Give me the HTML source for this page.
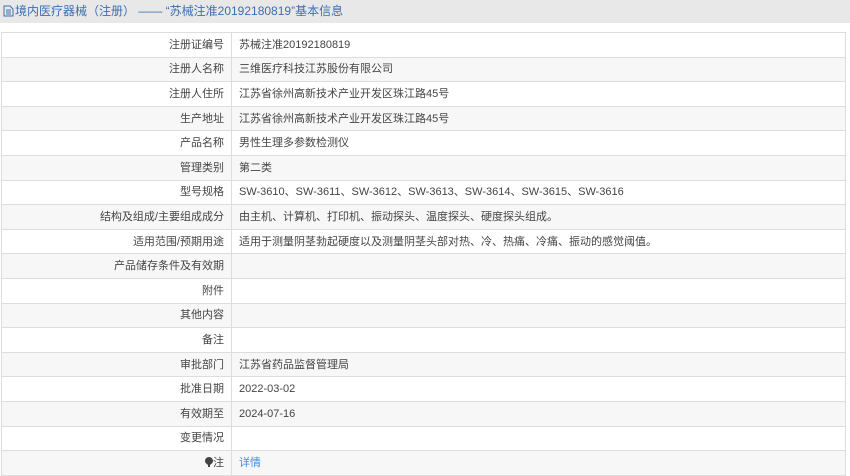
<!DOCTYPE html><html><head><meta charset="utf-8"><style>
body{margin:0;width:850px;height:476px;overflow:hidden;background:#fff;font-family:"Liberation Sans","Noto Sans CJK SC",sans-serif;}
.hd{height:23px;background:#e8e8e8;color:#3a6fb0;font-size:12px;line-height:23px;padding-left:3px;}
.hd svg{vertical-align:-2px;margin-right:1px}
table{position:absolute;top:32px;left:1px;width:845px;border-collapse:collapse;font-size:11px;color:#444;}
td{height:23.6px;border:1px solid #ddd;padding:0;line-height:14px;}
td.l{width:222px;text-align:right;padding-right:7px;}
td.v{padding-left:7px;}
tr:nth-child(even){background:#f7f7f7}
a{color:#3a8ee6;text-decoration:none}
</style></head><body>
<div class="hd"><svg width="11" height="12" viewBox="0 0 11 12"><path d="M1 1h6l3 3v7H1z" fill="none" stroke="#3a6fb0"/><path d="M3 5h5M3 7h5M3 9h5" stroke="#3a6fb0"/></svg>境内医疗器械（注册） —— “苏械注准20192180819”基本信息</div>
<table>
<tr><td class="l">注册证编号</td><td class="v">苏械注准20192180819</td></tr>
<tr><td class="l">注册人名称</td><td class="v">三维医疗科技江苏股份有限公司</td></tr>
<tr><td class="l">注册人住所</td><td class="v">江苏省徐州高新技术产业开发区珠江路45号</td></tr>
<tr><td class="l">生产地址</td><td class="v">江苏省徐州高新技术产业开发区珠江路45号</td></tr>
<tr><td class="l">产品名称</td><td class="v">男性生理多参数检测仪</td></tr>
<tr><td class="l">管理类别</td><td class="v">第二类</td></tr>
<tr><td class="l">型号规格</td><td class="v">SW-3610、SW-3611、SW-3612、SW-3613、SW-3614、SW-3615、SW-3616</td></tr>
<tr><td class="l">结构及组成/主要组成成分</td><td class="v">由主机、计算机、打印机、振动探头、温度探头、硬度探头组成。</td></tr>
<tr><td class="l">适用范围/预期用途</td><td class="v">适用于测量阴茎勃起硬度以及测量阴茎头部对热、冷、热痛、冷痛、振动的感觉阈值。</td></tr>
<tr><td class="l">产品储存条件及有效期</td><td class="v"></td></tr>
<tr><td class="l">附件</td><td class="v"></td></tr>
<tr><td class="l">其他内容</td><td class="v"></td></tr>
<tr><td class="l">备注</td><td class="v"></td></tr>
<tr><td class="l">审批部门</td><td class="v">江苏省药品监督管理局</td></tr>
<tr><td class="l">批准日期</td><td class="v">2022-03-02</td></tr>
<tr><td class="l">有效期至</td><td class="v">2024-07-16</td></tr>
<tr><td class="l">变更情况</td><td class="v"></td></tr>
<tr><td class="l"><svg width="8" height="10" viewBox="0 0 8 10" style="vertical-align:-1px"><path d="M4 0a4 4 0 0 1 4 4c0 2-2 3-3 4v2H3V8C2 7 0 6 0 4a4 4 0 0 1 4-4z" fill="#444"/></svg>注</td><td class="v"><a>详情</a></td></tr>
</table>
</body></html>
